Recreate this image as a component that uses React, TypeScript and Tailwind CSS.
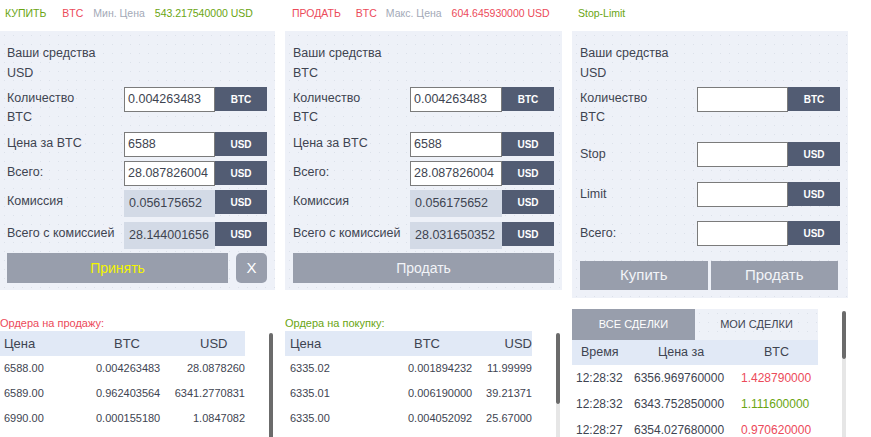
import React from "react";

const green = "text-[#6aa512]";
const red = "text-[#ec4a5a]";

const panelBg =
  "bg-[#eef1f8] bg-[radial-gradient(circle,#dce1ea_0.7px,transparent_0.9px)] bg-[length:9px_9px]";

type Row = {
  label: string[];
  value?: string;
  unit: string;
  readonly?: boolean;
  h: string;
};

const buyRows: Row[] = [
  { label: ["Количество", "BTC"], value: "0.004263483", unit: "BTC", h: "h-[45px]" },
  { label: ["Цена за BTC"], value: "6588", unit: "USD", h: "h-[29px]" },
  { label: ["Всего:"], value: "28.087826004", unit: "USD", h: "h-[29px]" },
  { label: ["Комиссия"], value: "0.056175652", unit: "USD", readonly: true, h: "h-[32px]" },
  { label: ["Всего с комиссией"], value: "28.144001656", unit: "USD", readonly: true, h: "h-[31px]" },
];

const sellRows: Row[] = [
  { label: ["Количество", "BTC"], value: "0.004263483", unit: "BTC", h: "h-[45px]" },
  { label: ["Цена за BTC"], value: "6588", unit: "USD", h: "h-[29px]" },
  { label: ["Всего:"], value: "28.087826004", unit: "USD", h: "h-[29px]" },
  { label: ["Комиссия"], value: "0.056175652", unit: "USD", readonly: true, h: "h-[32px]" },
  { label: ["Всего с комиссией"], value: "28.031650352", unit: "USD", readonly: true, h: "h-[31px]" },
];

const stopRows: Row[] = [
  { label: ["Количество", "BTC"], unit: "BTC", h: "h-[55px]" },
  { label: ["Stop"], unit: "USD", h: "h-[40px]" },
  { label: ["Limit"], unit: "USD", h: "h-[39px]" },
  { label: ["Всего:"], unit: "USD", h: "h-[40px]" },
];

const FormRow = ({ row, centered }: { row: Row; centered?: boolean }) => (
  <div className={`flex ${row.h}`}>
    <div
      className={`w-[117px] shrink-0 leading-[19px] text-[12.5px] text-[#3e4451] whitespace-nowrap ${
        centered && row.label.length === 1 ? "pt-[3px]" : "pt-[2px]"
      }`}
    >
      {row.label.map((l, i) => (
        <div key={i}>{l}</div>
      ))}
    </div>
    {row.readonly ? (
      <div className="flex-1 h-[27px] bg-[#d3dae6] pl-[5px] flex items-center text-[12.5px] text-[#3e4451]">
        {row.value}
      </div>
    ) : (
      <div className="flex-1 h-[25px] bg-white border border-[#7b7b7b] pl-[3px] flex items-center text-[12.5px] text-[#3e4451] whitespace-nowrap overflow-hidden">
        {row.value}
      </div>
    )}
    <div className="w-[52px] shrink-0 h-[24px] bg-[#525c73] text-white text-[10px] font-bold flex items-center justify-center">
      {row.unit}
    </div>
  </div>
);

const Funds = ({ cur }: { cur: string }) => (
  <div className="text-[12.5px] text-[#3e4451] leading-[20px]">
    <div>Ваши средства</div>
    <div>{cur}</div>
  </div>
);

const SellOrders = () => (
  <div className="w-[245px]">
    <div className="grid grid-cols-[90px_90px_65px] h-[25px] bg-[#e1e9f6] items-center text-[13px] text-[#3e4451]">
      <div className="pl-[4px]">Цена</div>
      <div className="pl-[24px]">BTC</div>
      <div className="pl-[20px]">USD</div>
    </div>
    {[
      ["6588.00", "0.004263483", "28.0878260"],
      ["6589.00", "0.962403564", "6341.2770831"],
      ["6990.00", "0.000155180", "1.0847082"],
    ].map((r, i) => (
      <div key={i} className="grid grid-cols-[90px_90px_65px] h-[25px] items-center text-[11px] text-[#3e4451]">
        <div className="pl-[4px]">{r[0]}</div>
        <div className="pl-[6px]">{r[1]}</div>
        <div className="whitespace-nowrap flex justify-end">{r[2]}</div>
      </div>
    ))}
  </div>
);

const BuyOrders = () => (
  <div className="w-[247px]">
    <div className="grid grid-cols-[105px_95px_47px] h-[25px] bg-[#e1e9f6] items-center text-[13px] text-[#3e4451]">
      <div className="pl-[5px]">Цена</div>
      <div className="pl-[24px]">BTC</div>
      <div className="text-right">USD</div>
    </div>
    {[
      ["6335.02", "0.001894232", "11.99999"],
      ["6335.01", "0.006190000", "39.21371"],
      ["6335.00", "0.004052092", "25.67000"],
    ].map((r, i) => (
      <div key={i} className="grid grid-cols-[105px_95px_47px] h-[25px] items-center text-[11px] text-[#3e4451]">
        <div className="pl-[5px]">{r[0]}</div>
        <div className="pl-[18px]">{r[1]}</div>
        <div className="whitespace-nowrap flex justify-end">{r[2]}</div>
      </div>
    ))}
  </div>
);

const trades = [
  { t: "12:28:32", p: "6356.969760000", v: "1.428790000", up: false },
  { t: "12:28:32", p: "6343.752850000", v: "1.111600000", up: true },
  { t: "12:28:27", p: "6354.027680000", v: "0.970620000", up: false },
];

export default function App() {
  return (
    <div className="h-[437px] overflow-hidden bg-white font-['Liberation_Sans',Arial,sans-serif] flex items-start">
      {/* buy column */}
      <div className="w-[275px] shrink-0 flex flex-col">
        <div className="h-[31px] pl-[5px] pb-[3px] flex items-center text-[10.5px] whitespace-nowrap">
          <span className={green}>КУПИТЬ</span>
          <span className={`${red} ml-[16px]`}>BTC</span>
          <span className="text-[#a3a9b7] ml-[10px]">Мин. Цена</span>
          <span className={`${green} ml-[10px]`}>543.217540000 USD</span>
        </div>
        <div className={`${panelBg} pl-[7px] pr-[8px] pt-[12px] pb-[7px]`}>
          <Funds cur="USD" />
          <div className="mt-[4px]">
            {buyRows.map((r, i) => (
              <FormRow key={i} row={r} />
            ))}
          </div>
          <div className="flex h-[30px] gap-[8px]">
            <button className="flex-1 bg-[#989eac] text-[#f3f500] text-[14px]">Принять</button>
            <button className="w-[31px] bg-[#989eac] rounded-[5px] text-white text-[15px]">X</button>
          </div>
        </div>
        <div className={`${red} text-[11px] leading-[13px] mt-[27px]`}>Ордера на продажу:</div>
        <div className="flex mt-[1px]">
          <SellOrders />
          <div className="ml-[24px] mt-[2px] w-[4px] h-[120px] rounded-t-[2px] bg-[#6b6b6b]" />
        </div>
      </div>

      {/* sell column */}
      <div className="w-[277px] shrink-0 ml-[10px] flex flex-col">
        <div className="h-[31px] pl-[7px] pb-[3px] flex items-center text-[10.5px] whitespace-nowrap">
          <span className={red}>ПРОДАТЬ</span>
          <span className={`${red} ml-[15px]`}>BTC</span>
          <span className="text-[#a3a9b7] ml-[9px]">Макс. Цена</span>
          <span className={`${red} ml-[10px]`}>604.645930000 USD</span>
        </div>
        <div className={`${panelBg} pl-[8px] pr-[8px] pt-[12px] pb-[7px]`}>
          <Funds cur="BTC" />
          <div className="mt-[4px]">
            {sellRows.map((r, i) => (
              <FormRow key={i} row={r} />
            ))}
          </div>
          <button className="w-full h-[30px] bg-[#989eac] text-[#f2f4f8] text-[14px]">Продать</button>
        </div>
        <div className={`${green} text-[11px] leading-[13px] mt-[27px]`}>Ордера на покупку:</div>
        <div className="flex mt-[1px]">
          <BuyOrders />
          <div className="ml-[24px] mt-[2px] w-[4px] h-[120px] flex flex-col">
            <div className="h-[71px] rounded-[2px] bg-[#6b6b6b]" />
            <div className="flex-1 bg-[#e6e6e6]" />
          </div>
        </div>
      </div>

      {/* stop-limit column */}
      <div className="w-[276px] shrink-0 ml-[10px] flex flex-col">
        <div className={`h-[31px] pl-[6px] pb-[3px] flex items-center text-[10.5px] ${green}`}>Stop-Limit</div>
        <div className={`${panelBg} pl-[8px] pr-[8px] pt-[12px] pb-[8px]`}>
          <Funds cur="USD" />
          <div className="mt-[4px]">
            {stopRows.map((r, i) => (
              <FormRow key={i} row={r} centered />
            ))}
          </div>
          <div className="flex h-[29px] gap-[3px] w-[258px]">
            <button className="flex-1 bg-[#989eac] text-[#f2f4f8] text-[15px]">Купить</button>
            <button className="flex-1 bg-[#989eac] text-[#f2f4f8] text-[15px]">Продать</button>
          </div>
        </div>
        <div className="flex mt-[11px]">
          <div className="w-[246px]">
            <div className="flex h-[31px] text-[11px]">
              <div className="w-[123px] bg-[#989eac] text-white flex items-center justify-center">ВСЕ СДЕЛКИ</div>
              <div className={`flex-1 ${panelBg} text-[#3e4451] flex items-center justify-center`}>МОИ СДЕЛКИ</div>
            </div>
            <div className="grid grid-cols-[58px_107px_81px] h-[25px] bg-[#e1e9f6] items-center text-[12.5px] text-[#3e4451]">
              <div className="pl-[9px]">Время</div>
              <div className="pl-[28px]">Цена за</div>
              <div className="pl-[27px]">BTC</div>
            </div>
            {trades.map((r, i) => (
              <div key={i} className="grid grid-cols-[58px_107px_81px] h-[26px] items-center text-[12px] text-[#3e4451] whitespace-nowrap">
                <div className="pl-[4px]">{r.t}</div>
                <div className="pl-[4px]">{r.p}</div>
                <div className={`pl-[4px] ${r.up ? green : red}`}>{r.v}</div>
              </div>
            ))}
          </div>
          <div className="ml-[24px] mt-[2px] w-[4px] h-[130px] flex flex-col">
            <div className="h-[48px] rounded-[2px] bg-[#6b6b6b]" />
            <div className="flex-1 bg-[#e6e6e6]" />
          </div>
        </div>
      </div>
    </div>
  );
}
